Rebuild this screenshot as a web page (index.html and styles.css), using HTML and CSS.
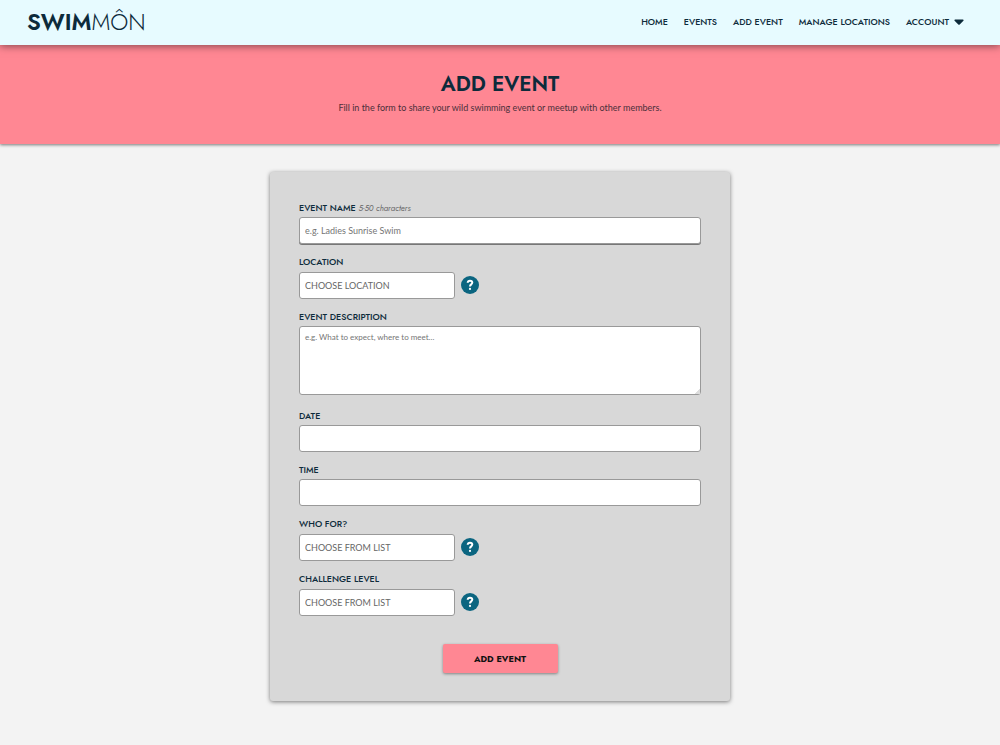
FILE: index.html
```
<!DOCTYPE html>
<html lang="en">
<head>
<meta charset="utf-8">
<meta name="viewport" content="width=device-width, initial-scale=1">
<title>Add Event | Swimmôn</title>
<link rel="stylesheet" href="styles.css">
</head>
<body>
<header class="site-header">
  <a class="logo" href="#"><b>SWIM</b>MÔN</a>
  <nav class="nav" aria-label="Main">
    <a href="#">HOME</a>
    <a href="#">EVENTS</a>
    <a href="#">ADD EVENT</a>
    <a href="#">MANAGE LOCATIONS</a>
    <a class="account" href="#">ACCOUNT
      <svg class="caret" viewBox="0 0 10 6" aria-hidden="true"><path d="M1.200.5h7.600c.8 0 1.100.8.6 1.300L5.700 5.400a1 1 0 0 1-1.400 0L.6 1.800C.1 1.300.4.5 1.200.5z"/></svg>
    </a>
  </nav>
</header>
<section class="banner">
  <h1>ADD EVENT</h1>
  <p>Fill in the form to share your wild swimming event or meetup with other members.</p>
</section>
<main>
  <form class="card">
    <div class="field">
      <label for="name">EVENT NAME <span class="hint">5-50 characters</span></label>
      <input class="control focused" id="name" type="text" placeholder="e.g. Ladies Sunrise Swim" autofocus>
    </div>
    <div class="field">
      <label for="location">LOCATION</label>
      <div class="row">
        <select class="control" id="location"><option>CHOOSE LOCATION</option></select>
        <button class="help" type="button" aria-label="Help with location"><svg viewBox="0 0 18 18" aria-hidden="true"><path d="M6.700 6.800C6.800 5.300 7.800 4.700 9 4.700c1.400 0 2.300.8 2.300 1.900 0 1.800-2.300 1.800-2.300 3.800"/><circle cx="9" cy="12.900" r="1.100"/></svg></button>
      </div>
    </div>
    <div class="field description">
      <label for="description">EVENT DESCRIPTION</label>
      <textarea class="control" id="description" placeholder="e.g. What to expect, where to meet..."></textarea>
    </div>
    <div class="field">
      <label for="date">DATE</label>
      <input class="control" id="date" type="text">
    </div>
    <div class="field">
      <label for="time">TIME</label>
      <input class="control" id="time" type="text">
    </div>
    <div class="field">
      <label for="who">WHO FOR?</label>
      <div class="row">
        <select class="control" id="who"><option>CHOOSE FROM LIST</option></select>
        <button class="help" type="button" aria-label="Help with who the event is for"><svg viewBox="0 0 18 18" aria-hidden="true"><path d="M6.700 6.800C6.800 5.300 7.800 4.700 9 4.700c1.400 0 2.300.8 2.300 1.900 0 1.800-2.300 1.800-2.300 3.800"/><circle cx="9" cy="12.900" r="1.100"/></svg></button>
      </div>
    </div>
    <div class="field">
      <label for="level">CHALLENGE LEVEL</label>
      <div class="row">
        <select class="control" id="level"><option>CHOOSE FROM LIST</option></select>
        <button class="help" type="button" aria-label="Help with challenge level"><svg viewBox="0 0 18 18" aria-hidden="true"><path d="M6.700 6.800C6.800 5.300 7.800 4.700 9 4.700c1.400 0 2.300.8 2.300 1.900 0 1.800-2.300 1.800-2.300 3.800"/><circle cx="9" cy="12.900" r="1.100"/></svg></button>
      </div>
    </div>
    <button class="submit" type="submit">ADD EVENT</button>
  </form>
</main>
</body>
</html>
```

FILE: styles.css
```
* {
  box-sizing: border-box;
}

body {
  margin: 0;
  background: #f3f3f3;
  color: #0d2b3b;
  font-family: Jost, Lato, "Liberation Sans", sans-serif;
}

.site-header {
  position: relative;
  display: flex;
  flex-wrap: wrap;
  align-items: center;
  justify-content: space-between;
  min-height: 45px;
  padding: 0 36px 2px 27px;
  background: #e7fbff;
  box-shadow: 0 1px 8px rgba(0, 0, 0, 0.5);
}

.logo {
  padding-top: 1px;
  color: inherit;
  font-size: 23px;
  font-weight: 300;
  line-height: 42px;
  text-decoration: none;
}

.logo b {
  font-weight: 600;
}

.nav {
  display: flex;
  flex-wrap: wrap;
  gap: 16px;
}

.nav a {
  color: inherit;
  font-size: 9px;
  font-weight: 500;
  line-height: 16px;
  text-decoration: none;
}

.nav .account {
  display: flex;
  align-items: center;
  gap: 5px;
}

.caret {
  width: 10px;
  height: 6px;
  fill: currentColor;
}

.banner {
  padding: 24px 16px 28px;
  background: #ff8793;
  box-shadow: 0 1px 3px rgba(0, 0, 0, 0.5);
  text-align: center;
}

.banner h1 {
  margin: 0;
  font-size: 21px;
  font-weight: 600;
  line-height: 30px;
}

.banner p {
  margin: 0;
  color: #4b2f3a;
  font-family: Lato, sans-serif;
  font-size: 9px;
  line-height: 17px;
}

main {
  padding: 28px 16px 40px;
}

.card {
  display: flex;
  flex-direction: column;
  gap: 12px;
  max-width: 460px;
  margin: 0 auto;
  padding: 30px 29px 28px;
  border-radius: 3px;
  background: #d8d8d8;
  box-shadow: 0 1px 4px rgba(0, 0, 0, 0.5);
}

.field {
  display: flex;
  flex-direction: column;
  gap: 3px;
}

.description {
  padding-bottom: 3px;
}

.field label {
  font-size: 9px;
  font-weight: 500;
  line-height: 12px;
}

.hint {
  color: #666;
  font-size: 8px;
  font-style: italic;
  font-weight: 400;
}

.control {
  width: 100%;
  height: 27px;
  margin: 0;
  padding: 0 5px;
  border: 1px solid #999;
  border-radius: 3px;
  outline: none;
  background: #fff;
  color: #666;
  font-family: Lato, sans-serif;
  font-size: 9px;
}

.control::placeholder {
  color: #757575;
  opacity: 1;
}

.focused {
  box-shadow: 0 1px 0 #777;
}

textarea.control {
  display: block;
  height: 69px;
  padding: 5px;
  font-size: 8px;
  line-height: 10px;
  resize: vertical;
}

textarea::-webkit-resizer {
  background: linear-gradient(135deg, transparent 80%, #ddd 80%);
}

.row {
  display: flex;
  align-items: center;
  gap: 6px;
  min-height: 28px;
}

select.control {
  width: 156px;
  appearance: none;
}

.help {
  width: 18px;
  height: 18px;
  padding: 0;
  border: 0;
  border-radius: 50%;
  background: #0b6580;
}

.help svg {
  display: block;
}

.help path {
  fill: none;
  stroke: #fff;
  stroke-width: 2;
}

.help circle {
  fill: #fff;
}

.submit {
  align-self: center;
  width: 115px;
  height: 29px;
  margin-top: 16px;
  padding: 0;
  border: 0;
  border-radius: 2px;
  background: #ff8793;
  box-shadow: 0 1px 3px rgba(0, 0, 0, 0.4);
  color: #111;
  font-family: inherit;
  font-size: 9px;
  font-weight: 700;
}
```
